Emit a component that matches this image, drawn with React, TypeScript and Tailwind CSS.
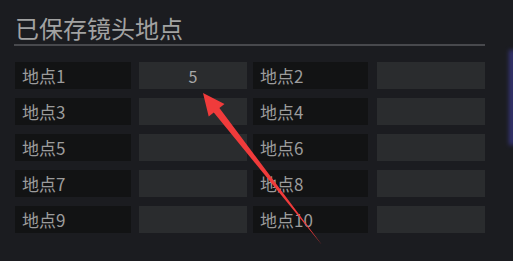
import React from "react";

const rows: [string, string, string, string][] = [
  ["地点1", "5", "地点2", ""],
  ["地点3", "", "地点4", ""],
  ["地点5", "", "地点6", ""],
  ["地点7", "", "地点8", ""],
  ["地点9", "", "地点10", ""],
];

export default function App() {
  return (
    <div
      className="relative w-[513px] h-[261px] overflow-hidden bg-[#1b1c20] pl-[14px] pr-[28px]"
      style={{ fontFamily: '"Noto Sans CJK SC", "Noto Sans", sans-serif' }}
    >
      <div className="pt-[14px] pb-[2px] border-b-2 border-[#48494d]">
        <div className="text-[24px] leading-[28px] text-[#a2a2a2] pl-[1px]">已保存镜头地点</div>
      </div>
      <div className="mt-[16px] flex flex-col gap-[9px] pl-[1px]">
        {rows.map((r, i) => (
          <div key={i} className="flex h-[27px]">
            <div className="w-[116px] bg-[#121314] pl-[7px] flex items-center text-[17px] text-[#9c9c9c]">
              {r[0]}
            </div>
            <div className="ml-[8px] w-[108px] bg-[#2a2c2e] flex items-center justify-center text-[16px] text-[#a8a8a8]">
              {r[1]}
            </div>
            <div className="ml-[6px] w-[115px] bg-[#121314] pl-[7px] flex items-center text-[17px] text-[#9c9c9c]">
              {r[2]}
            </div>
            <div className="ml-[9px] w-[108px] bg-[#2a2c2e] flex items-center justify-center text-[16px] text-[#a8a8a8]">
              {r[3]}
            </div>
          </div>
        ))}
      </div>
      <div className="absolute left-[509px] top-[50px] w-[6px] h-[95px] bg-[#3e3d96] opacity-70 blur-[2px]" />
      <svg className="absolute left-0 top-0" width="513" height="261" viewBox="0 0 513 261">
        <polygon
          points="203,93 224.5,104.1 219.4,108.1 322,245 213.8,112.5 208.7,116.5"
          fill="#f03b3b"
        />
      </svg>
    </div>
  );
}
